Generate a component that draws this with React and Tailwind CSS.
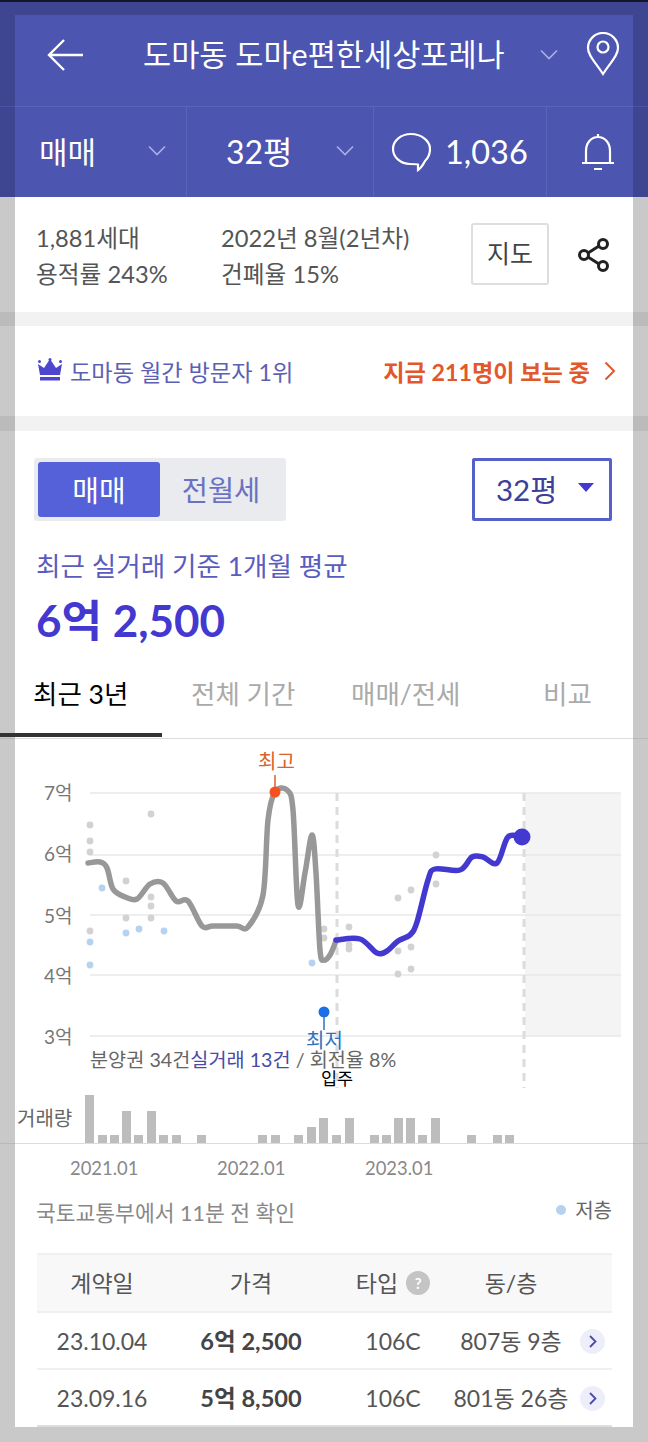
const FONT = { fontFamily: 'Lato, "Noto Sans CJK KR", sans-serif' };

const GRAY_LINE = [[88,863],[100,862],[107,868],[113,889],[125,897],[137,899],[150,884],[163,883],[176,901],[188,901],[202,926],[213,926],[237,926],[248,927],[263,895],[268,820],[275,792],[287,790],[293,810],[298,905],[305,873],[312,835],[316,873],[320,950],[324,960],[330,955],[336,941]];
const BLUE_LINE = [[336,940],[360,939],[377,953],[387,951],[398,941],[410,935],[417,922],[428,880],[435,869],[460,870],[472,857],[483,857],[497,863],[508,837],[522,837]];
const GRAY_DOTS = [[90,825],[90,841],[90,852],[90,931],[126,881],[126,918],[151,814],[151,897],[151,906],[151,918],[324,929],[324,938],[349,927],[349,945],[349,949],[398,898],[411,890],[436,855],[436,884],[398,951],[411,947],[398,974],[411,969]];
const BLUE_DOTS = [[90,942],[90,965],[102,888],[126,933],[139,929],[164,931],[312,963]];
const BARS = [[85,48],[98,8],[110,8],[122,32],[134,8],[147,32],[159,8],[172,8],[197,8],[258,8],[271,8],[294,8],[307,16],[319,25],[332,8],[345,25],[370,8],[382,8],[394,25],[406,25],[418,8],[431,25],[467,8],[493,8],[505,8]];
const GRID = [[793,"7억",792],[855,"6억",853],[915,"5억",915],[975,"4억",975],[1036,"3억",1036]];

function smooth(pts) {
  let d = `M${pts[0][0]} ${pts[0][1]}`;
  for (let i = 0; i < pts.length - 1; i++) {
    const p0 = pts[i - 1] || pts[i];
    const p1 = pts[i];
    const p2 = pts[i + 1];
    const p3 = pts[i + 2] || p2;
    const c1 = [p1[0] + (p2[0] - p0[0]) / 6, p1[1] + (p2[1] - p0[1]) / 6];
    const c2 = [p2[0] - (p3[0] - p1[0]) / 6, p2[1] - (p3[1] - p1[1]) / 6];
    d += ` C${c1[0]} ${c1[1]} ${c2[0]} ${c2[1]} ${p2[0]} ${p2[1]}`;
  }
  return d;
}

function Band({ side, inner, className = "", children }) {
  return (
    <div className={`px-[15px] ${side}`}>
      <div className={`${inner} ${className}`}>{children}</div>
    </div>
  );
}

function Chevron({ className = "" }) {
  return (
    <svg width="18" height="11" viewBox="0 0 18 11" fill="none" stroke="#aab0e4" strokeWidth="1.6" className={className}>
      <path d="M1 1.5 9 9.5 17 1.5" />
    </svg>
  );
}

function Header() {
  return (
    <>
      <div className="h-[2px] bg-[#14162e]" />
      <div className="h-[13px] bg-[#3f4691]" />
      <Band side="bg-[#3f4691]" inner="bg-[#4c55b0]" className="h-[91px] pb-[12px] flex items-center text-white">
        <svg width="38" height="34" viewBox="0 0 38 34" fill="none" stroke="#fff" strokeWidth="2.4" className="ml-[31px]">
          <path d="M18 2 3 17l15 15M3 17h34" />
        </svg>
        <div className="ml-[59px] w-[361px] text-[30.600px] whitespace-nowrap">도마동 도마e편한세상포레나</div>
        <Chevron className="ml-[36px]" />
        <svg width="34" height="44" viewBox="0 0 34 44" fill="none" stroke="#fff" strokeWidth="2.2" className="ml-[28px] -mt-[2px]">
          <path d="M17 42C10 31 2 24 2 16a15 15 0 0 1 30 0c0 8-8 15-15 26Z" />
          <circle cx="17" cy="15" r="5.5" />
        </svg>
      </Band>
      <Band side="bg-[#4a52a8]" inner="bg-[#5a63ba]" className="h-[1px]" />
      <Band side="bg-[#3f4691]" inner="bg-[#4c55b0]" className="h-[90px] flex text-white">
        <div className="w-[172px] flex items-center border-r border-[#5a63ba]">
          <span className="ml-[24px] text-[31px]">매매</span>
          <Chevron className="ml-[52px] -mt-[4px]" />
        </div>
        <div className="w-[187px] flex items-center border-r border-[#5a63ba]">
          <span className="ml-[39px] text-[32px]">32평</span>
          <Chevron className="ml-[43px] -mt-[4px]" />
        </div>
        <div className="w-[173px] flex items-center border-r border-[#5a63ba]">
          <svg width="40" height="40" viewBox="0 0 40 40" fill="none" stroke="#fff" strokeWidth="2.2" className="ml-[17px]">
            <path d="M20 2C10 2 2 8.500 2 17s8 15 17 15c3 0 6 0 8 .5V38c3-2 5-5 7-9 3-3 5-7 5-12C39 8.500 30 2 20 2Z" />
          </svg>
          <span className="ml-[14px] text-[32.500px]">1,036</span>
        </div>
        <div className="flex-1 flex items-center">
          <svg width="34" height="40" viewBox="0 0 34 40" fill="none" stroke="#fff" strokeWidth="2.2" className="ml-[34px]">
            <path d="M1 31h32M5 31V19C5 11 10 5 17 5s12 6 12 14v12M17 5V2M13 37h8" />
          </svg>
        </div>
      </Band>
    </>
  );
}

function Info() {
  return (
    <Band side="bg-[#c9c9c9]" inner="bg-white" className="h-[115px] flex items-start">
      <div className="ml-[21px] mt-[23px] w-[185px] text-[23.700px] leading-[36px] text-[#555]">
        <div>1,881세대</div>
        <div>용적률 243%</div>
      </div>
      <div className="mt-[23px] w-[250px] text-[23.700px] leading-[36px] text-[#555]">
        <div>2022년 8월(2년차)</div>
        <div>건폐율 15%</div>
      </div>
      <div className="mt-[26px] w-[78px] h-[62px] flex items-center justify-center rounded-[3px] border-2 border-[#dedede] text-[25px] text-[#444]">지도</div>
      <svg width="32" height="34" viewBox="0 0 32 34" fill="none" stroke="#222" strokeWidth="3" className="ml-[29px] mt-[41px]">
        <circle cx="25" cy="6" r="4.500" />
        <circle cx="25" cy="28" r="4.500" />
        <circle cx="6" cy="17" r="4.500" />
        <path d="M10 15 21 8M10 19l11 7" />
      </svg>
    </Band>
  );
}

function Rank() {
  return (
    <Band side="bg-[#c9c9c9]" inner="bg-white" className="h-[90px] flex items-center">
      <svg width="24" height="23" viewBox="0 0 24 23" fill="#4f46d0" className="ml-[23px] -mt-[4px]">
        <path d="M2 17 0 6l6 4 6-9 6 9 6-4-2 11Z" />
        <circle cx="1.500" cy="3.500" r="1.500" />
        <circle cx="12" cy="1.500" r="1.500" />
        <circle cx="22.500" cy="3.500" r="1.500" />
        <rect x="2" y="19" width="20" height="3.500" />
      </svg>
      <span className="ml-[8px] pt-[2px] text-[23.200px] text-[#5c60b4] whitespace-nowrap">도마동 월간 방문자 1위</span>
      <span className="ml-[90px] pt-[2px] text-[23.200px] font-bold text-[#e2582a] whitespace-nowrap">지금 211명이 보는 중</span>
      <svg width="12" height="20" viewBox="0 0 12 20" fill="none" stroke="#e2582a" strokeWidth="2" className="ml-[14px]">
        <path d="M1.500 1.500 10 10l-8.500 8.500" />
      </svg>
    </Band>
  );
}

function Summary() {
  return (
    <>
      <Band side="bg-[#c9c9c9]" inner="bg-white" className="h-[307px]">
        <div className="pt-[27px] pl-[19px] pr-[21px] flex justify-between">
          <div className="w-[252px] h-[63px] p-[4px] flex rounded-[3px] bg-[#e9ebee]">
            <div className="w-[122px] pt-[2px] flex items-center justify-center rounded-[3px] bg-[#5561d8] text-[29px] text-white">매매</div>
            <div className="flex-1 pt-[2px] flex items-center justify-center text-[28.500px] text-[#6b72c4]">전월세</div>
          </div>
          <div className="w-[140px] h-[63px] pt-[2px] flex items-center rounded-[2px] border-[3px] border-[#5561c8]">
            <span className="ml-[21px] text-[29.500px] text-[#3d3f99]">32평</span>
            <span className="ml-[21px] -mt-[6px] w-0 h-0 border-x-[8px] border-t-[9px] border-x-transparent border-t-[#4338cf]" />
          </div>
        </div>
        <div className="ml-[21px] mt-[26px] text-[26.600px] leading-[38px] text-[#5a5cc0]">최근 실거래 기준 1개월 평균</div>
        <div className="ml-[21px] mt-[5px] text-[44px] leading-[60px] font-bold text-[#4338cf]">6억 2,500</div>
        <div className="relative mt-[14px] h-[60px] text-[26.500px] leading-[60px] text-[#aaa] whitespace-nowrap">
          <span className="absolute left-[18px] text-black">최근 3년</span>
          <span className="absolute left-[176px]">전체 기간</span>
          <span className="absolute left-[336px]">매매/전세</span>
          <span className="absolute left-[528px]">비교</span>
        </div>
      </Band>
      <div className="relative">
        <div className="absolute left-0 -top-[5px] w-[162px] h-[4px] bg-[#333]" />
        <Band side="bg-[#b8b8b8]" inner="bg-[#dcdcdc]" className="h-[1px]" />
      </div>
    </>
  );
}

function Chart() {
  return (
    <Band side="bg-[#c9c9c9]" inner="bg-white" className="h-[404px]">
      <svg width="618" height="404" viewBox="15 739 618 404" className="block" style={FONT}>
        <rect x="525" y="793" width="96" height="243" fill="#f4f4f4" />
        {GRID.map(([y, label, ty]) => (
          <g key={y}>
            <line x1="90" x2="621" y1={y} y2={y} stroke="#e8e8e8" strokeWidth="1.500" />
            <text x="44" y={ty + 7.5} className="fill-[#777] text-[19px]">{label}</text>
          </g>
        ))}
        <line x1="337" x2="337" y1="793" y2="1088" stroke="#dcdcdc" strokeWidth="3" strokeDasharray="8 6" />
        <line x1="524" x2="524" y1="793" y2="1088" stroke="#dcdcdc" strokeWidth="3" strokeDasharray="8 6" />
        {GRAY_DOTS.map(([cx, cy], i) => <circle key={i} cx={cx} cy={cy} r="3.400" fill="#d2d2d2" />)}
        {BLUE_DOTS.map(([cx, cy], i) => <circle key={i} cx={cx} cy={cy} r="3.400" fill="#b5d3f0" />)}
        <path d={smooth(GRAY_LINE)} fill="none" stroke="#989898" strokeWidth="5.500" strokeLinecap="round" />
        <path d={smooth(BLUE_LINE)} fill="none" stroke="#4338d0" strokeWidth="5.500" strokeLinecap="round" />
        <circle cx="522" cy="837" r="8.500" fill="#4338d0" />
        <text x="258" y="769" className="fill-[#d9622b] text-[20px]">최고</text>
        <line x1="275" x2="275" y1="775" y2="790" stroke="#d9622b" strokeWidth="1.500" />
        <circle cx="275" cy="792" r="5.500" fill="#f4511e" />
        <circle cx="324" cy="1012" r="5.500" fill="#1a6fe8" />
        <line x1="324" x2="324" y1="1014" y2="1030" stroke="#2f72c0" strokeWidth="1.500" />
        <text x="306" y="1048" className="fill-[#2f72c0] text-[20px]">최저</text>
        <text x="90" y="1067" className="fill-[#666] text-[19.700px]">
          분양권 34건<tspan className="fill-[#4a4aa8]">실거래 13건</tspan> / 회전율 8%
        </text>
        <text x="321" y="1085" className="fill-black text-[17.500px]">입주</text>
        <text x="17" y="1126" className="fill-[#666] text-[20px]">거래량</text>
        {BARS.map(([x, h]) => <rect key={x} x={x} y={1143 - h} width="9" height={h} fill="#bdbdbd" />)}
      </svg>
    </Band>
  );
}

function Row({ date, price, type, floor, last }) {
  return (
    <div className={`grid grid-cols-[130px_168px_116px_120px_41px] items-center h-[57px] pt-[2px] text-[23px] text-[#555] border-b-2 ${last ? "border-[#dedede]" : "border-[#f0f0f0]"}`}>
      <div className="text-center">{date}</div>
      <div className="text-center font-bold text-[#444] text-[23.600px]">{price}</div>
      <div className="text-center">{type}</div>
      <div className="text-center whitespace-nowrap">{floor}</div>
      <div className="w-[25px] h-[25px] ml-[9px] flex items-center justify-center rounded-full bg-[#eeeefa]">
        <svg width="8" height="13" viewBox="0 0 8 13" fill="none" stroke="#4a4ab0" strokeWidth="1.800">
          <path d="M1 1l5.500 5.500L1 12" />
        </svg>
      </div>
    </div>
  );
}

function Deals() {
  return (
    <>
      <Band side="bg-[#b8b8b8]" inner="bg-[#dcdcdc]" className="h-[1px]" />
      <Band side="bg-[#c9c9c9]" inner="bg-white" className="h-[283px]">
        <div className="relative h-[24px]">
          <span className="absolute left-[55px] text-[18.400px] leading-[48px] text-[#888]">2021.01</span>
          <span className="absolute left-[202px] text-[18.400px] leading-[48px] text-[#888]">2022.01</span>
          <span className="absolute left-[350px] text-[18.400px] leading-[48px] text-[#888]">2023.01</span>
        </div>
        <div className="h-[85px] pl-[21px] pr-[21px] flex justify-between pt-[30px]">
          <span className="text-[21.500px] leading-[30px] text-[#888]">국토교통부에서 11분 전 확인</span>
          <span className="flex items-center h-[24px] text-[20px] text-[#666]">
            <span className="w-[10px] h-[10px] rounded-full bg-[#b5d3f0] mr-[9px]" />저층
          </span>
        </div>
        <div className="mx-[22px] w-[575px]">
          <div className="grid grid-cols-[130px_168px_116px_120px_41px] items-center h-[60px] text-[23px] text-[#555] bg-[#f8f8f8] border-y-2 border-[#f0f0f0]">
            <div className="text-center">계약일</div>
            <div className="text-center">가격</div>
            <div className="flex items-center justify-center gap-[8px]">
              타입
              <span className="w-[24px] h-[24px] flex items-center justify-center rounded-full bg-[#c4c4c4] text-[15px] font-bold text-white">?</span>
            </div>
            <div className="text-center">동/층</div>
          </div>
          <Row date="23.10.04" price="6억 2,500" type="106C" floor="807동 9층" />
          <Row date="23.09.16" price="5억 8,500" type="106C" floor="801동 26층" last />
        </div>
      </Band>
    </>
  );
}

export default function App() {
  return (
    <div className="w-[648px] h-[1442px] overflow-hidden bg-[#c9c9c9]" style={FONT}>
      <Header />
      <Info />
      <Band side="bg-[#bbb]" inner="bg-[#f2f2f2]" className="h-[14px]" />
      <Rank />
      <Band side="bg-[#bbb]" inner="bg-[#f2f2f2]" className="h-[15px]" />
      <Summary />
      <Chart />
      <Deals />
    </div>
  );
}
